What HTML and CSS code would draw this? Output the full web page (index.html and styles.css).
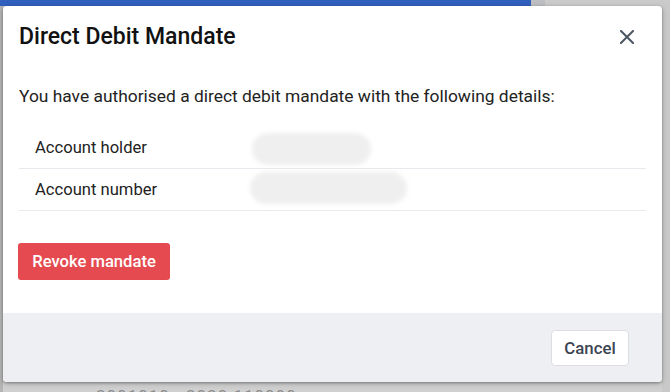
FILE: index.html
```html
<!DOCTYPE html>
<html lang="en">
<head>
<meta charset="utf-8">
<title>Direct Debit Mandate</title>
<link rel="stylesheet" href="styles.css">
</head>
<body>
<div class="page">
  <div class="topbar">
    <div class="topbar-blue"></div>
    <div class="topbar-side"></div>
    <div class="topbar-rest"></div>
  </div>
  <div class="page-body">
    <div class="page-main">
      <div class="page-dates">2001010 - 2020 110090</div>
    </div>
    <div class="page-side"></div>
  </div>
</div>

<div class="modal" role="dialog" aria-labelledby="modal-title">
  <div class="modal-header">
    <h2 id="modal-title" class="modal-title">Direct Debit Mandate</h2>
    <button class="close-btn" aria-label="Close">
      <svg width="14" height="14" viewBox="0 0 14 14" aria-hidden="true">
        <path d="M1 1 L13 13 M13 1 L1 13" stroke="#4b5563" stroke-width="2" stroke-linecap="square" fill="none"/>
      </svg>
    </button>
  </div>
  <div class="modal-body">
    <p class="intro">You have authorised a direct debit mandate with the following details:</p>
    <div class="details">
      <div class="detail-row">
        <div class="detail-label">Account holder</div>
        <div class="detail-value"><span class="redacted redacted-holder"></span></div>
      </div>
      <div class="detail-row">
        <div class="detail-label">Account number</div>
        <div class="detail-value"><span class="redacted redacted-number"></span></div>
      </div>
    </div>
    <button class="btn-danger">Revoke mandate</button>
  </div>
  <div class="modal-footer">
    <button class="btn-secondary">Cancel</button>
  </div>
</div>
</body>
</html>
```

FILE: styles.css
```css
* { box-sizing: border-box; }

html, body {
  margin: 0;
  padding: 0;
  width: 670px;
  height: 392px;
  overflow: hidden;
}

body {
  font-family: Roboto, "Liberation Sans", Arial, sans-serif;
  background: #cbcbcb;
  position: relative;
}

/* ---------- background page (under the backdrop) ---------- */
.page {
  display: flex;
  flex-direction: column;
  height: 392px;
}

.topbar {
  display: flex;
  height: 6px;
}
.topbar-blue { width: 531px; background: #305fbd; }
.topbar-side { width: 14px; background: #bdbec2; }
.topbar-rest { flex: 1; background: #cacaca; }

.page-body {
  flex: 1;
  display: flex;
}
.page-main {
  flex: 1;
  background: #d0d0d0;
  border-left: 3px solid #b5b5b5;
  display: flex;
  flex-direction: column;
  justify-content: flex-end;
  padding-left: 93px;
}
.page-dates {
  font-size: 17px;
  line-height: 17px;
  color: #8c8c8c;
  letter-spacing: 1px;
  margin-bottom: -13px;
}
.page-side {
  width: 8px;
  background: #c9c9c9;
}

/* ---------- modal ---------- */
.modal {
  position: absolute;
  left: 3px;
  top: 6px;
  width: 659px;
  height: 376px;
  background: #ffffff;
  border-radius: 4px;
  box-shadow: 0 1px 3px rgba(0, 0, 0, 0.35), 0 2px 6px rgba(0, 0, 0, 0.15);
  display: flex;
  flex-direction: column;
  overflow: hidden;
}

.modal-header {
  display: flex;
  align-items: center;
  justify-content: space-between;
  padding: 17px 28px 0 16px;
}

.modal-title {
  margin: 0;
  font-size: 23px;
  line-height: 28px;
  font-weight: 500;
  color: #111111;
}

.close-btn {
  border: 0;
  background: transparent;
  padding: 0;
  width: 14px;
  height: 14px;
  display: flex;
  cursor: pointer;
}

.modal-body {
  flex: 1;
  padding: 33px 16px 0 16px;
}

.intro {
  margin: 0 0 19px 0;
  font-size: 17.4px;
  line-height: 24px;
  color: #222222;
}

.details {
  display: flex;
  flex-direction: column;
  margin-bottom: 32px;
}

.detail-row {
  display: grid;
  grid-template-columns: 231px 1fr;
  align-items: center;
  height: 42px;
  border-bottom: 1px solid #e8e9ee;
}

.detail-label {
  padding-left: 16px;
  font-size: 16.6px;
  color: #222222;
}

.detail-value {
  display: flex;
  align-items: center;
}

.redacted {
  display: block;
  height: 32px;
  border-radius: 16px;
  background: #efefef;
  filter: blur(2px);
}
.redacted-holder { width: 119px; margin-left: 2px; margin-top: 3px; }
.redacted-number { width: 157px; margin-top: -4px; }

.btn-danger {
  display: block;
  height: 37px;
  width: 152px;
  padding: 0;
  margin-left: -1px;
  border: 0;
  border-radius: 3px;
  background: #e54a50;
  color: #ffffff;
  font-family: inherit;
  font-size: 16.6px;
  font-weight: 500;
  cursor: pointer;
}

.modal-footer {
  height: 69px;
  background: #eeeff3;
  display: flex;
  justify-content: flex-end;
  align-items: flex-start;
  padding: 17px 33px 0 16px;
}

.btn-secondary {
  width: 78px;
  height: 36px;
  padding: 0;
  border: 1px solid #dcdee4;
  border-radius: 4px;
  background: #ffffff;
  color: #3b4451;
  font-family: inherit;
  font-size: 16.8px;
  font-weight: 500;
  cursor: pointer;
}
```
